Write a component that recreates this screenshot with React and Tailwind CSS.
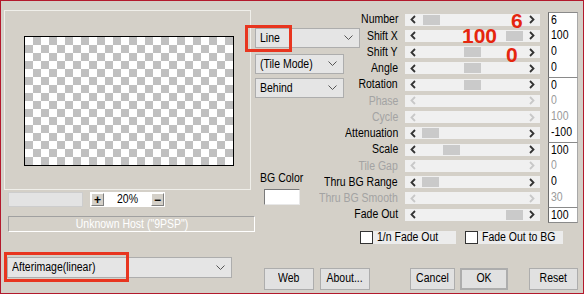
const FONT = "font-['Liberation_Sans',Arial,sans-serif]";

const rows = [
  { label: 'Number', value: '6', thumb: 18, sep: true },
  { label: 'Shift X', value: '100', thumb: 101 },
  { label: 'Shift Y', value: '0', thumb: 59 },
  { label: 'Angle', value: '0', thumb: 59 },
  { label: 'Rotation', value: '0', thumb: 59, sep: true },
  { label: 'Phase', value: '0', disabled: true },
  { label: 'Cycle', value: '100', disabled: true },
  { label: 'Attenuation', value: '-100', thumb: 17 },
  { label: 'Scale', value: '100', thumb: 38, sep: true },
  { label: 'Tile Gap', value: '0', disabled: true },
  { label: 'Thru BG Range', value: '0', thumb: 17 },
  { label: 'Thru BG Smooth', value: '30', disabled: true },
  { label: 'Fade Out', value: '100', thumb: 101, sep: true, last: true },
]

// the dialog font is tall and narrow, so squeeze plain Liberation Sans a bit
function T({ children, origin = 'origin-left' }) {
  return <span className={`inline-block whitespace-nowrap scale-x-[0.84] ${origin}`}>{children}</span>
}

function Chevron() {
  return (
    <svg width="9" height="6" viewBox="0 0 9 6" className="shrink-0">
      <path d="M0.5 0.5 L4.5 4.5 L8.5 0.5" fill="none" stroke="#555" strokeWidth="1" />
    </svg>
  )
}

function Select({ label, className }) {
  return (
    <div className={`flex items-center justify-between shrink-0 bg-[#e5e5e5] border border-[#adadad] pl-[4px] pr-[6px] ${className}`}>
      <T>{label}</T>
      <Chevron />
    </div>
  )
}

function Arrow({ dir, disabled }) {
  return (
    <svg width="6" height="9" viewBox="0 0 6 9" className="shrink-0">
      <path
        d={dir === 'left' ? 'M5 1 L1.5 4.5 L5 8' : 'M1 1 L4.5 4.5 L1 8'}
        fill="none"
        stroke={disabled ? '#c8c8c8' : '#333'}
        strokeWidth="1.8"
      />
    </svg>
  )
}

function SmallBtn({ children }) {
  return (
    <div className="w-[13px] h-[13px] flex items-center justify-center bg-[#d4d0c8] border border-t-white border-l-white border-b-[#808080] border-r-[#808080] font-bold text-[12px] leading-none">
      {children}
    </div>
  )
}

function Button({ children, className }) {
  return (
    <div className={`h-[22px] flex items-center justify-center bg-[#e1e1e1] border border-[#adadad] ${className}`}>
      <T origin="origin-center">{children}</T>
    </div>
  )
}

function Row({ row }) {
  const dim = row.disabled
  return (
    <div className="h-[16.25px] flex items-center">
      <div className={`w-[85px] pr-[7px] flex justify-end ${dim ? 'text-[#a3a3a3]' : 'text-black'}`}>
        <T origin="origin-right">{row.label}</T>
      </div>
      <div className="relative w-[135px] h-[12px] bg-[#f0f0f0] flex items-center justify-between px-[5px]">
        <Arrow dir="left" disabled={dim} />
        {!dim && (
          <div
            className="absolute top-[1px] w-[17px] h-[10px] bg-[#cacaca]"
            style={{ left: row.thumb }}
          />
        )}
        <Arrow dir="right" disabled={dim} />
      </div>
      <div
        className={`ml-[8px] w-[30px] h-full bg-white border-l border-l-[#6e6e6e] border-r border-r-[#a8a8a8] pl-[2px] leading-[15px] ${row.sep ? 'border-t border-t-[#8a8a8a]' : ''} ${row.last ? 'border-b border-b-[#8a8a8a]' : ''} ${dim ? 'text-[#9a9a9a]' : 'text-black'}`}
      >
        <T>{row.value}</T>
      </div>
    </div>
  )
}

function Checkbox({ label, className, width }) {
  return (
    <div className={`flex items-center h-[13px] ${className}`}>
      <div className="w-[13px] h-[13px] bg-white border border-[#333]" />
      <div className={`h-[13px] bg-[#ececec] pl-[4px] leading-[13px] ${width}`}>
        <T>{label}</T>
      </div>
    </div>
  )
}

export default function App() {
  return (
    <div className="w-[586px] h-[295px] bg-white">
      <div className={`relative w-[584px] h-[294px] border border-[#b3192c] bg-[#d4d0c8] flex text-[12.5px] text-black ${FONT}`}>
        {/* left column */}
        <div className="w-[254px] shrink-0 flex flex-col">
          <div className="mt-[9px] ml-[3px] w-[247px] h-[180px] border border-[#f0efea] pt-[25px] pl-[19px]">
            <div className="w-[210px] h-[130px] border border-black bg-[conic-gradient(#c0c0c0_25%,#fff_0_50%,#c0c0c0_0_75%,#fff_0)] bg-[length:16px_16px]" />
          </div>
          <div className="mt-[2px] ml-[7px] flex items-center h-[15px]">
            <div className="w-[75px] h-[15px] bg-[#e3e3e3] border border-[#cdcdcd]" />
            <div className="ml-[7px] w-[75px] h-[15px] bg-white flex items-center pl-[1px] pr-[1px]">
              <SmallBtn>+</SmallBtn>
              <span className="flex-1 text-center leading-[15px]">
                <T origin="origin-center">20%</T>
              </span>
              <SmallBtn>−</SmallBtn>
            </div>
          </div>
          <div className="mt-[9px] ml-[7px] w-[247px] h-[16px] border border-t-[#a0a0a0] border-l-[#a0a0a0] border-b-white border-r-white flex items-center justify-center text-white leading-[14px]">
            <T origin="origin-center">Unknown Host ("9PSP")</T>
          </div>
          <Select label="Afterimage(linear)" className="mt-[25px] ml-[6px] w-[225px] h-[21px]" />
        </div>

        {/* right panel */}
        <div className="flex-1 flex flex-col">
          <div className="flex pt-[10.5px]">
            <div className="w-[65px] shrink-0 flex flex-col">
              <Select label="Line" className="mt-[16.5px] w-[105px] h-[20px]" />
              <Select label="(Tile Mode)" className="mt-[6px] w-[89px] h-[20px]" />
              <Select label="Behind" className="mt-[4px] w-[89px] h-[20px]" />
              <div className="mt-[73px] ml-[9px] w-[36px] flex flex-col items-center">
                <span className="leading-[15px]">
                  <T origin="origin-center">BG Color</T>
                </span>
                <div className="mt-[3px] w-[36px] h-[16px] bg-white border border-t-[#7a7a7a] border-l-[#7a7a7a] border-b-[#e8e8e8] border-r-[#e8e8e8]" />
              </div>
            </div>
            <div className="flex flex-col">
              {rows.map((r) => (
                <Row key={r.label} row={r} />
              ))}
            </div>
          </div>

          <div className="mt-[8px] flex">
            <Checkbox label="1/n Fade Out" className="ml-[105px]" width="w-[83px]" />
            <Checkbox label="Fade Out to BG" className="ml-[9px]" width="w-[85px]" />
          </div>

          <div className="mt-[24px] flex">
            <Button className="ml-[9px] w-[50px]">Web</Button>
            <Button className="ml-[6px] w-[50px]">About...</Button>
            <Button className="ml-[40px] w-[45px]">Cancel</Button>
            <Button className="ml-[5px] w-[48px] border-2 border-[#0078d7]">OK</Button>
            <Button className="ml-[21px] w-[49px]">Reset</Button>
          </div>
        </div>

        {/* annotations */}
        <div className="absolute left-[244px] top-[24px] w-[47px] h-[27px] border-[3px] border-[#e8351f]" />
        <div className="absolute left-[3px] top-[251px] w-[125px] h-[30px] border-[3px] border-[#e8351f]" />
        <span className="absolute left-[510px] top-[9px] text-[21px] leading-none font-bold text-[#e5260e]">6</span>
        <span className="absolute left-[461px] top-[24px] text-[21px] leading-none font-bold text-[#e5260e]">100</span>
        <span className="absolute left-[505px] top-[43px] text-[21px] leading-none font-bold text-[#e5260e]">0</span>
      </div>
    </div>
  )
}
